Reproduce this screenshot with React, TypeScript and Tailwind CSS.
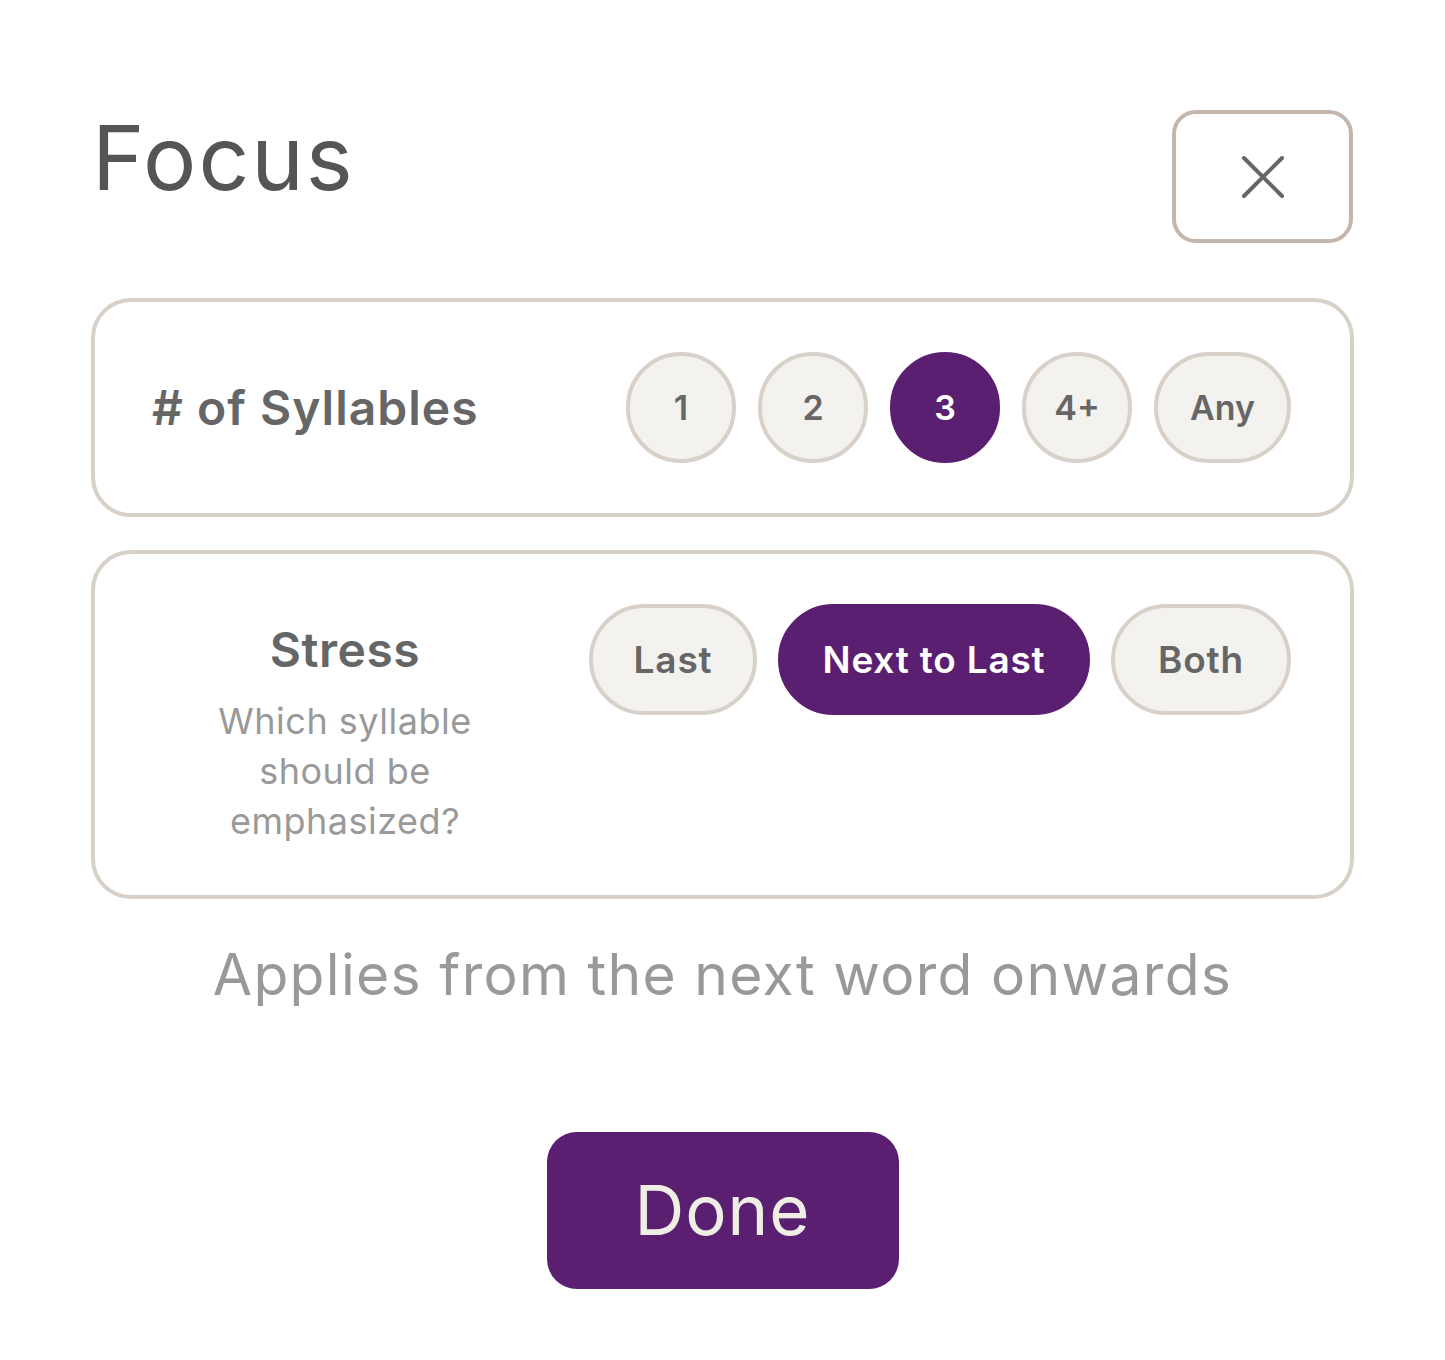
import { useState } from "react";

const font = { fontFamily: "Inter, 'Noto Sans', sans-serif" };

export default function App() {
	const [syllables, setSyllables] = useState("3");
	const [stress, setStress] = useState("Next to Last");

	return (
		<main style={font} className="min-h-screen bg-white px-[91px] pt-[110px]">
			<div className="flex items-start justify-between">
				<h1 className="mt-[-12px] pl-[1px] text-[89px] leading-[120px] font-normal tracking-[2px] text-[#555555]">Focus</h1>
				<button className="mr-[1px] flex h-[133px] w-[181px] items-center justify-center rounded-[24px] border-4 border-[#c4b6ad] bg-white">
					<svg width="44" height="44" viewBox="0 0 44 44" fill="none" stroke="#666666" strokeWidth="4" strokeLinecap="round">
						<line x1="3" y1="3" x2="41" y2="41" />
						<line x1="41" y1="3" x2="3" y2="41" />
					</svg>
				</button>
			</div>

			<section className="mt-[55px] flex items-center justify-between rounded-[40px] border-4 border-[#d8d1c9] py-[50px] pl-[57px] pr-[59px]">
				<h2 className="text-[48px] font-semibold tracking-[1px] text-[#666666]"># of Syllables</h2>
				<div className="flex gap-[22px]">
					{["1", "2", "3", "4+", "Any"].map((s) => (
						<button
							key={s}
							onClick={() => setSyllables(s)}
							className={
								"flex h-[111px] items-center justify-center rounded-full border-4 text-[34px] font-semibold " +
								(s === "Any" ? "w-[137px] " : "w-[110px] ") +
								(syllables === s ? "border-[#5a1f70] bg-[#5a1f70] text-white" : "border-[#d8d1c9] bg-[#f3f2ee] text-[#666666]")
							}
						>
							{s}
						</button>
					))}
				</div>
			</section>

			<section className="mt-[33px] flex items-start justify-between rounded-[40px] border-4 border-[#d8d1c9] pt-[50px] pb-[49px] pl-[57px] pr-[59px]">
				<div className="w-[386px] text-center">
					<h2 className="mt-[18px] text-[48px] leading-[56px] font-semibold tracking-[0.5px] text-[#666666]">Stress</h2>
					<p className="mx-auto mt-[18px] w-[300px] text-[36px] leading-[50px] tracking-[0.5px] text-[#999999]">Which syllable should be emphasized?</p>
				</div>
				<div className="flex gap-[21px]">
					{[
						{ label: "Last", w: "w-[168px]" },
						{ label: "Next to Last", w: "w-[312px]" },
						{ label: "Both", w: "w-[180px]" },
					].map((b) => (
						<button
							key={b.label}
							onClick={() => setStress(b.label)}
							className={
								"flex h-[111px] items-center justify-center rounded-full border-4 text-[37px] font-semibold tracking-[0.8px] " +
								b.w +
								" " +
								(stress === b.label ? "border-[#5a1f70] bg-[#5a1f70] text-white" : "border-[#d8d1c9] bg-[#f3f2ee] text-[#666666]")
							}
						>
							{b.label}
						</button>
					))}
				</div>
			</section>

			<p className="mt-[36px] text-center text-[57px] leading-[80px] tracking-[1.3px] text-[#999999]">Applies from the next word onwards</p>

			<div className="mt-[117px] flex justify-center">
				<button className="h-[157px] w-[352px] rounded-[30px] bg-[#5a1f70] text-[69px] tracking-[1px] text-[#eeeee4]">Done</button>
			</div>
		</main>
	);
}
